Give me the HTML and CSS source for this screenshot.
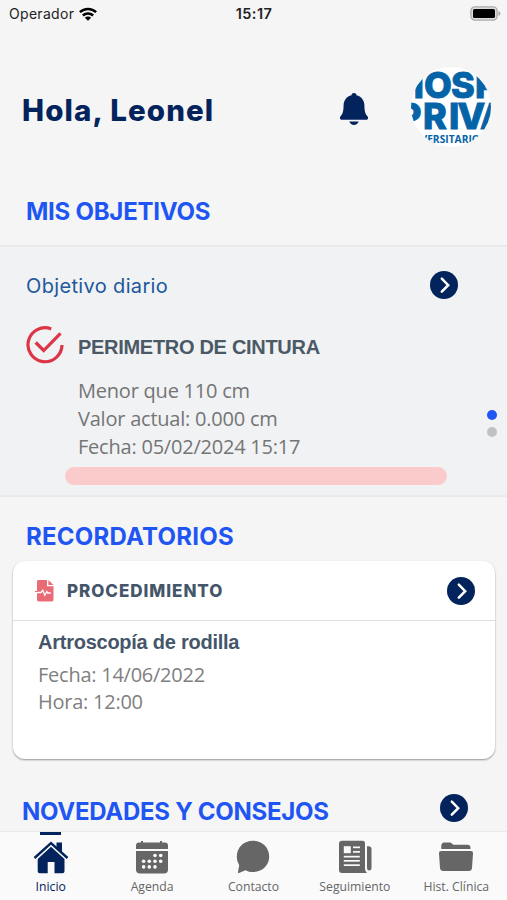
FILE: index.html
```html
<!DOCTYPE html>
<html lang="es">
<head>
    <meta charset="UTF-8" />
    <meta name="viewport" content="width=device-width, initial-scale=1.0" />
    <title>Inicio</title>
    <link rel="stylesheet" href="styles.css">
</head>
<body>
    <div class="app">
        <div class="status-bar">
            <div class="carrier">
                <span class="carrier-name">Operador</span>
                <svg class="wifi" width="18" height="14" viewBox="0 0 18 14" fill="none" stroke="#000" stroke-width="2.5">
                    <path d="M.9 5.2a11.6 11.6 0 0 1 16.2 0" />
                    <path d="M3.9 8.5a7.3 7.3 0 0 1 10.2 0" />
                    <path d="M9 13.8L5.9 10.8a4.4 4.4 0 0 1 6.2 0z" fill="#000" stroke="none" />
                </svg>
            </div>
            <span class="clock">15:17</span>
            <svg class="battery" width="31" height="15" viewBox="0 0 31 15">
                <rect x=".9" y=".9" width="26.2" height="13.2" rx="4" fill="#ddd" stroke="#aaa" stroke-width="1.3" />
                <rect x="3" y="3" width="22" height="9" rx="1.6" fill="#000" />
                <path d="M28.5 5v5q2-.8 2-2.5t-2-2.5z" fill="#aaa" />
            </svg>
        </div>

        <header class="header">
            <h1 class="greeting">Hola, Leonel</h1>
            <svg class="bell" width="28" height="32" viewBox="0 0 28 32" fill="#03235c">
                <path d="M14 0c-1.400 0-2.400.9-2.500 2.200C6.800 3.400 3.700 7.200 3.600 12c-.1 6.500-.8 8.800-2.900 11-1.500 1.600-.6 3.800 1.400 3.800h23.800c2 0 2.900-2.200 1.400-3.800-2.100-2.200-2.800-4.500-2.900-11-.1-4.800-3.200-8.600-7.900-9.800C16.400.9 15.400 0 14 0z" />
                <path d="M9.300 28.600h9.400c-.8 2.200-2.500 3.400-4.700 3.400s-3.900-1.200-4.700-3.400z" />
            </svg>
            <svg class="avatar" width="80" height="80" viewBox="0 0 80 80">
                <defs>
                    <clipPath id="avatarClip"><circle cx="40" cy="40" r="40" /></clipPath>
                </defs>
                <circle cx="40" cy="40" r="40" fill="#fff" />
                <g class="avatar-text" clip-path="url(#avatarClip)">
                    <text class="avatar-big" x="-14 13 40 64" y="31">HOSP</text>
                    <text class="avatar-big" x="-13 12 38 46.500 69" y="62">PRIVA</text>
                    <text class="avatar-small" x="-10" y="75.500" textLength="79" lengthAdjust="spacingAndGlyphs">UNIVERSITARIO</text>
                </g>
            </svg>
        </header>

        <h2 class="title title-goals">MIS OBJETIVOS</h2>

        <section class="goals">
            <div class="goal">
                <div class="goal-top">
                    <span class="goal-label">Objetivo diario</span>
                    <svg class="arrow" viewBox="0 0 28 28"><circle cx="14" cy="14" r="14" /><path d="M11.800 7.700l6.400 6.500-6.400 6.500" /></svg>
                </div>
                <div class="goal-name">
                    <svg class="check" width="38" height="38" viewBox="0 0 38 38" fill="none" stroke="#dc3545" stroke-width="3.200">
                        <path d="M25.200 2.900A17 17 0 1 0 36 19" />
                        <path d="M9.700 16.500l8 8L34.500 7.300" />
                    </svg>
                    <span class="goal-title">PERIMETRO DE CINTURA</span>
                </div>
                <div class="goal-data">
                    <div class="line-min">Menor que 110 cm</div>
                    <div class="line-val">Valor actual: 0.000 cm</div>
                    <div class="line-date">Fecha: 05/02/2024 15:17</div>
                </div>
                <div class="progress"></div>
            </div>
            <div class="dots">
                <span class="dot dot-active"></span>
                <span class="dot"></span>
            </div>
        </section>

        <h2 class="title title-reminders">RECORDATORIOS</h2>

        <section class="card">
            <div class="card-head">
                <svg class="file" width="19" height="22" viewBox="0 0 19 22">
                    <path d="M3.400 0H12v6.200h6.500v13.600a1.700 1.700 0 0 1-1.700 1.700H3.700A1.700 1.700 0 0 1 2 19.800V1.500Q2 0 3.400 0z" fill="#e96b75" />
                    <path d="M13.400 0l5.100 4.900h-5.100z" fill="#e96b75" />
                    <path d="M2 12.500h4l1.800-2.300 2 5 2-3.700 1 1.500h3" fill="none" stroke="#fff" stroke-width="1.300" />
                    <path d="M0 11.500h3" stroke="#e96b75" stroke-width="1" />
                </svg>
                <span class="card-title">PROCEDIMIENTO</span>
                <svg class="arrow" viewBox="0 0 28 28"><circle cx="14" cy="14" r="14" /><path d="M11.800 7.700l6.400 6.500-6.400 6.500" /></svg>
            </div>
            <div class="card-body">
                <div class="card-name">Artroscopía de rodilla</div>
                <div class="card-date">Fecha: 14/06/2022</div>
                <div class="card-time">Hora: 12:00</div>
            </div>
        </section>

        <div class="news">
            <h2 class="title title-news">NOVEDADES Y CONSEJOS</h2>
            <svg class="arrow" viewBox="0 0 28 28"><circle cx="14" cy="14" r="14" /><path d="M11.800 7.700l6.400 6.500-6.400 6.500" /></svg>
        </div>

        <nav class="tabs">
            <a class="tab tab-active">
                <svg width="36" height="34" viewBox="0 0 36 34">
                    <path d="M1.500 18L18 3l16.500 15" fill="none" stroke="currentColor" stroke-width="2.400" />
                    <path d="M23.500 2.500h5.500v11l-5.500-5z" fill="currentColor" />
                    <path d="M18 6.800l13.500 12.300v12.200q0 2-2 2h-8V22h-6.800v11.300h-8q-2 0-2-2V19.100z" fill="currentColor" />
                </svg>
                <span>Inicio</span>
            </a>
            <a class="tab">
                <svg width="36" height="34" viewBox="0 0 36 34">
                    <path d="M2 9V5.500q0-3 3-3h2V1h2v1.500h17V1h2v1.500h3q3 0 3 3V9z" fill="currentColor" />
                    <path d="M2 11h32v18.500q0 4-4 4H6q-4 0-4-4z" fill="currentColor" />
                    <g fill="#fafafa">
                        <circle cx="21" cy="15.500" r="1.800" /><circle cx="26.700" cy="15.500" r="1.800" />
                        <circle cx="9.600" cy="21.200" r="1.800" /><circle cx="15.300" cy="21.200" r="1.800" /><circle cx="21" cy="21.200" r="1.800" /><circle cx="26.700" cy="21.200" r="1.800" />
                        <circle cx="9.600" cy="26.900" r="1.800" /><circle cx="15.300" cy="26.900" r="1.800" /><circle cx="21" cy="26.900" r="1.800" />
                    </g>
                </svg>
                <span>Agenda</span>
            </a>
            <a class="tab">
                <svg width="36" height="34" viewBox="0 0 36 34">
                    <path d="M18 .8c9.200 0 16.200 6.800 16.200 15.700S27.200 32 18 32c-2.800 0-5.200-.5-7.600-1.800L4 33q-1.200.2-1-.9l1.200-6.900A15.400 15.400 0 0 1 1.800 16.500C1.800 7.600 8.800.8 18 .8z" fill="currentColor" />
                </svg>
                <span>Contacto</span>
            </a>
            <a class="tab">
                <svg width="36" height="34" viewBox="0 0 36 34">
                    <path d="M5 .8h20.500q2.500 0 2.500 2.500V29q0 2 2 4H5q-3 0-3-3V3.800q0-3 3-3z" fill="currentColor" />
                    <path d="M30 6.300h1.500q3 0 3 3V28q0 2.500-2.200 2.500T30 28z" fill="currentColor" />
                    <g fill="#fafafa">
                        <rect x="6.800" y="6.200" width="7" height="7" />
                        <rect x="16" y="6.500" width="7" height="1.700" /><rect x="16" y="11" width="7" height="1.700" />
                        <rect x="6.800" y="15.800" width="16" height="1.700" /><rect x="6.800" y="20" width="16" height="1.700" /><rect x="6.800" y="24.300" width="16" height="1.700" />
                    </g>
                </svg>
                <span>Seguimiento</span>
            </a>
            <a class="tab">
                <svg width="36" height="34" viewBox="0 0 36 34">
                    <path d="M3.300 9V6q0-3.500 3-3.500h5.500q1.200 0 2.200 1l1.200 1.200H29.500q3 0 3 3V9z" fill="currentColor" />
                    <path d="M3 11h30q2.200 0 2 2.200L34 28q-.3 3-3.200 3H5.300q-3 0-3.300-3L1 13.200q-.2-2.200 2-2.200z" fill="currentColor" />
                </svg>
                <span>Hist. Clínica</span>
            </a>
        </nav>
    </div>
</body>
</html>
```
FILE: styles.css
```css
body {
    margin: 0;
    background-color: #f5f5f5;
    font-family: "Open Sans", "Noto Sans", sans-serif;
}

svg {
    display: block;
    flex-shrink: 0;
}

.app {
    height: 900px;
    display: flex;
    flex-direction: column;
    overflow: hidden;
    white-space: nowrap;
}

/* Status bar */
.status-bar {
    display: grid;
    grid-template-columns: 1fr auto 1fr;
    align-items: center;
    height: 27px;
    padding: 0 6px 0 9px;
    color: #222;
    font-family: Inter, sans-serif;
    font-size: 14px;
}

.carrier {
    display: flex;
    align-items: center;
    gap: 5px;
    letter-spacing: 0.3px;
}

.clock {
    margin-right: 2px;
    font-weight: 600;
    font-size: 14.5px;
    letter-spacing: 0.4px;
}

.battery {
    justify-self: end;
}

/* Header */
.header {
    display: flex;
    align-items: center;
    height: 80px;
    margin-top: 40px;
    padding: 0 16px 0 22px;
}

.greeting {
    flex: 1;
    margin: 0;
    padding-top: 6px;
    color: #03235c;
    font-family: Inter, sans-serif;
    font-weight: 800;
    font-size: 29.5px;
    letter-spacing: 1.1px;
}

.bell {
    margin: 3px 43px 0 0;
}

.avatar-text {
    fill: #0564a8;
    font-family: Inter, sans-serif;
}

.avatar-big {
    font-size: 36px;
    font-weight: 800;
    stroke: #0564a8;
    stroke-width: 0.9px;
}

.avatar-small {
    font-family: "Open Sans", sans-serif;
    font-size: 11px;
    font-weight: 700;
}

/* Section titles */
.title {
    margin: 0;
    color: #1f55f3;
    font-family: Inter, sans-serif;
    font-size: 24px;
    font-weight: 700;
    line-height: 30px;
}

.title-goals {
    margin: 50px 0 18px 26px;
    letter-spacing: -0.25px;
}

.title-reminders {
    margin: 25px 0 9px 26px;
    letter-spacing: 0.23px;
}

/* Goals */
.goals {
    display: flex;
    box-sizing: border-box;
    height: 252px;
    padding: 24px 10px 0 26px;
    background-color: #f0f2f4;
    border-top: 2px solid #e8eaeb;
    border-bottom: 2px solid #e8eaeb;
}

.goal {
    width: 432px;
}

.goal-top {
    display: flex;
    align-items: center;
    justify-content: space-between;
    height: 28px;
}

.goal-label {
    padding-top: 2px;
    color: #20589b;
    font-family: Inter, sans-serif;
    font-size: 20px;
    letter-spacing: 0.35px;
}

.arrow {
    width: 28px;
    height: 28px;
    fill: #03235c;
}

.arrow path {
    fill: none;
    stroke: #fff;
    stroke-width: 2.5;
    stroke-linecap: round;
}

.goal-name {
    display: flex;
    align-items: center;
    gap: 14px;
    margin-top: 27px;
}

.goal-title {
    padding-top: 5px;
    color: #4b5966;
    font-family: "Liberation Sans", Arial, sans-serif;
    font-size: 20px;
    font-weight: 700;
    letter-spacing: -0.3px;
}

.goal-data {
    margin: 13px 0 0 52px;
    color: #757575;
    font-size: 20px;
    line-height: 28px;
    letter-spacing: -0.22px;
}

.progress {
    width: 382px;
    height: 18px;
    margin: 6px 0 0 39px;
    background-color: #fbcaca;
    border-radius: 9px;
}

.dots {
    display: flex;
    flex-direction: column;
    gap: 7px;
    margin: 139px 0 0 auto;
}

.dot {
    width: 10px;
    height: 10px;
    background-color: #c0c1c3;
    border-radius: 50%;
}

.dot-active {
    background-color: #1f55f3;
}

/* Reminder card */
.card {
    height: 198px;
    margin: 0 12px 0 13px;
    background-color: #fff;
    border-radius: 12px;
    box-shadow: 0 1px 2px rgba(0, 0, 0, 0.4);
}

.card-head {
    display: flex;
    align-items: center;
    height: 59px;
    padding: 0 20px 0 22px;
    border-bottom: 1px solid #dedede;
}

.card-title {
    flex: 1;
    margin-left: 13px;
    color: #45566a;
    font-family: Inter, sans-serif;
    font-size: 17px;
    font-weight: 800;
    letter-spacing: 0.95px;
}

.card-body {
    padding: 8px 25px;
    color: #808080;
    font-size: 20px;
    line-height: 27px;
    letter-spacing: -0.25px;
}

.card-name {
    margin-bottom: 5px;
    color: #45566a;
    font-family: "Liberation Sans", Arial, sans-serif;
    font-weight: 700;
}

/* News */
.news {
    display: flex;
    align-items: center;
    justify-content: space-between;
    flex: 1;
    padding: 24px 39px 0 22px;
}

.title-news {
    padding-top: 8px;
    letter-spacing: -0.27px;
}

/* Bottom tabs */
.tabs {
    display: grid;
    grid-template-columns: repeat(5, 1fr);
    height: 68px;
    background-color: #fafafa;
    box-shadow: 0 -1px 1px rgba(0, 0, 0, 0.04);
}

.tab {
    display: flex;
    flex-direction: column;
    align-items: center;
    padding-top: 8px;
    color: #666;
    font-size: 12.2px;
    line-height: 18px;
}

.tab svg {
    margin-bottom: 4px;
}

.tab-active {
    padding-top: 0;
    color: #03235c;
}

.tab-active::before {
    content: "";
    width: 21px;
    height: 3px;
    margin-bottom: 5px;
    background-color: #03235c;
}
```
